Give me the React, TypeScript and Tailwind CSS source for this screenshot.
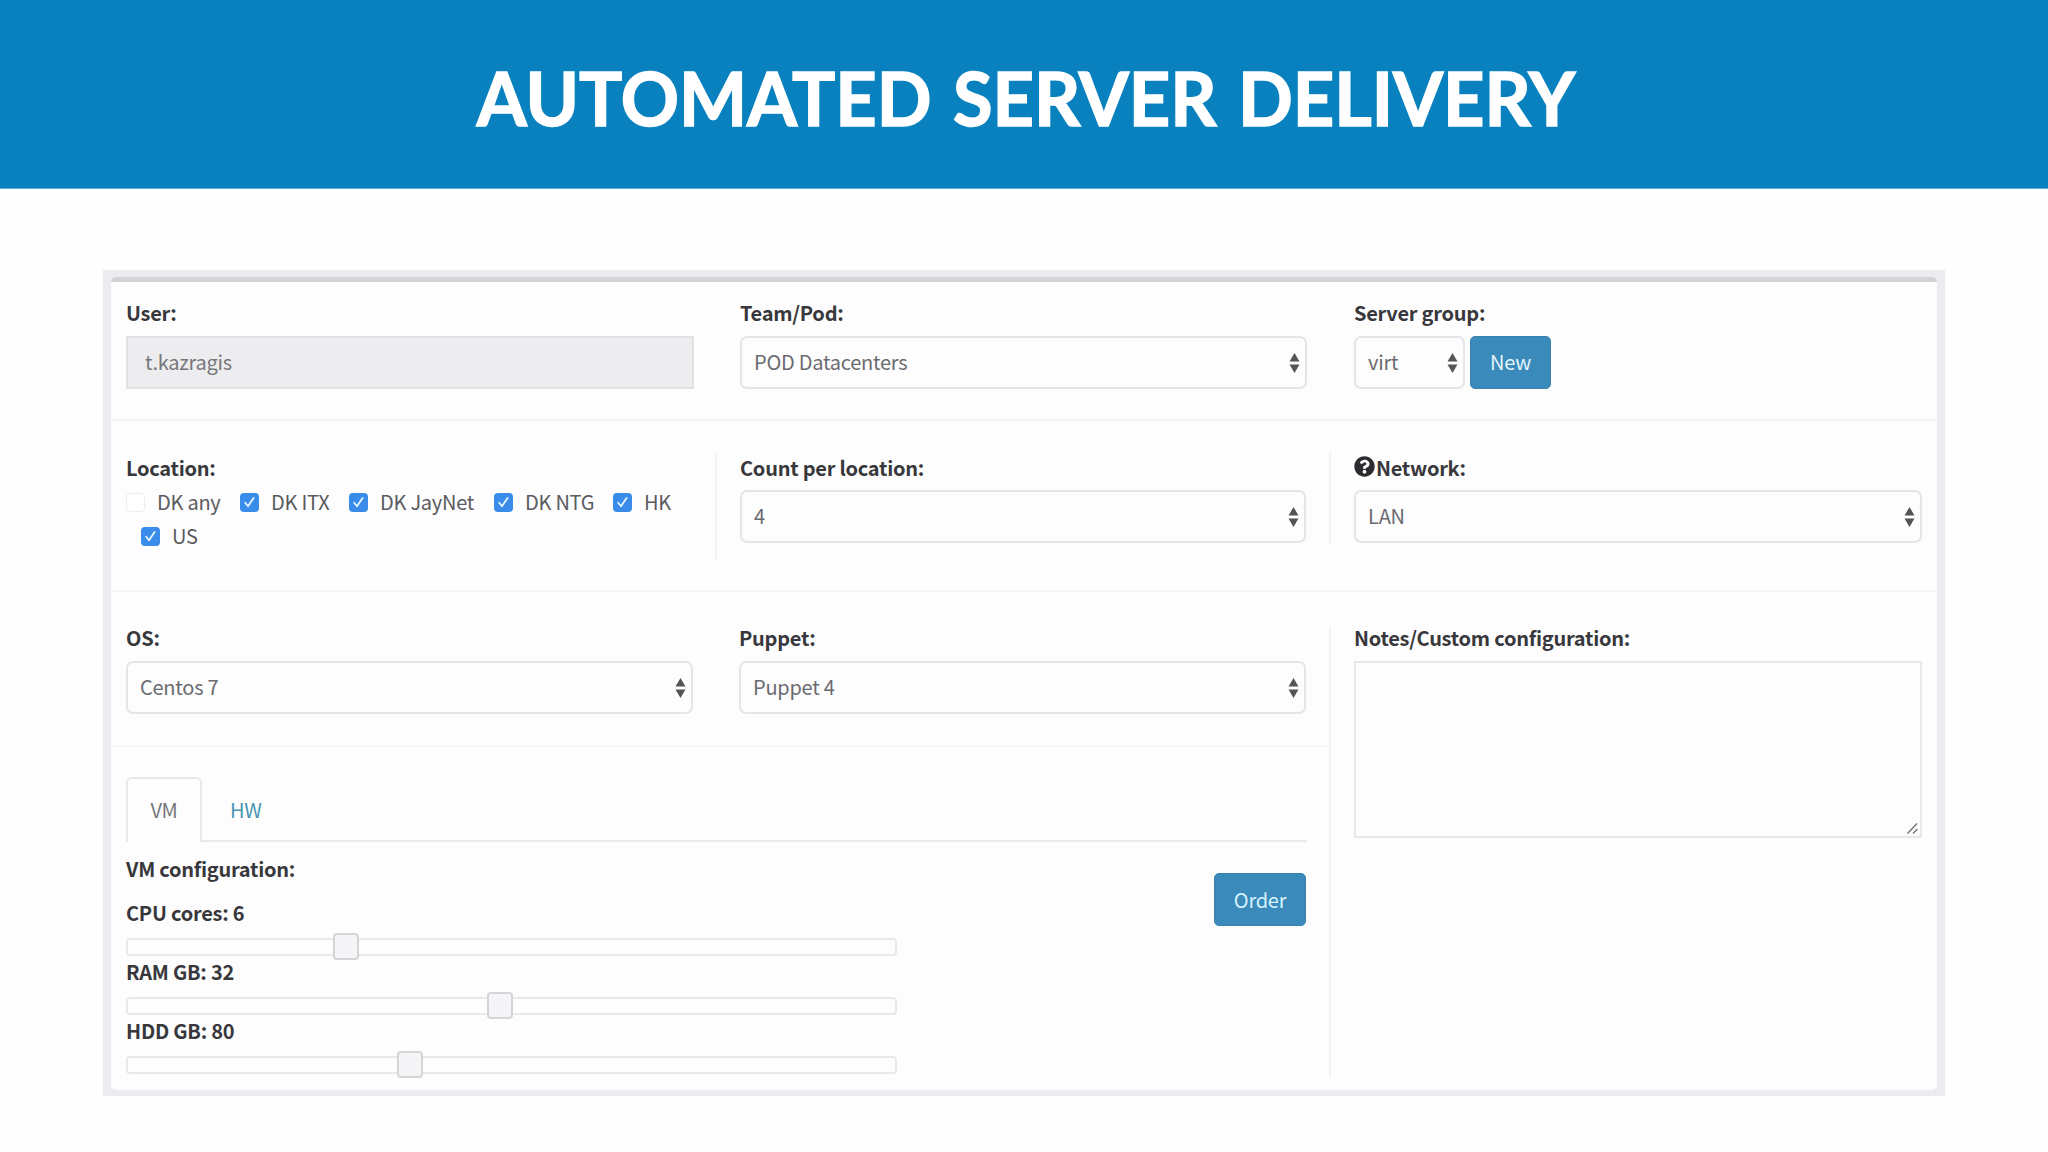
import type { ReactNode } from "react";
import { FaQuestionCircle } from "react-icons/fa";

function Label({ children }: { children: ReactNode }) {
  return <div className="flex h-[30px] items-center pt-[2px] font-bold leading-[28px] text-[#38383c] whitespace-nowrap">{children}</div>;
}

function SelectBox({ value, className }: { value: string; className: string }) {
  return (
    <div className={`flex h-[53px] items-center justify-between rounded-[7px] border-2 border-[#e6e4ea] pl-[12px] pr-[5px] text-[#6b6b6f] ${className}`}>
      <span className="pb-px">{value}</span>
      <svg width="11" height="20" viewBox="0 0 11 20" fill="#555558">
        <path d="M5.5 0 L10.5 8.5 H0.5 Z" />
        <path d="M0.5 11.5 H10.5 L5.5 20 Z" />
      </svg>
    </div>
  );
}

function Check({ label, checked = true, className }: { label: string; checked?: boolean; className: string }) {
  return (
    <label className={`flex shrink-0 items-center whitespace-nowrap text-[#5b5b5f] ${className}`}>
      {checked ? (
        <svg width="19" height="19" viewBox="0 0 19 19" className="mr-[12px]">
          <rect width="19" height="19" rx="4" fill="#3a8cea" />
          <path d="M5.2 9.8 L8 13.2 L13.6 5" fill="none" stroke="#e8f6ff" strokeWidth="1.8" strokeLinecap="round" strokeLinejoin="round" />
        </svg>
      ) : (
        <span className="mr-[12px] h-[19px] w-[19px] rounded-[4px] border border-[#eeecf1] bg-white" />
      )}
      {label}
    </label>
  );
}

function Slider({ label, position }: { label: string; position: number }) {
  return (
    <div className="h-[59px]">
      <Label>{label}</Label>
      <div className="relative mt-[11px] h-[18px] w-[771px] rounded-[4px] border-2 border-[#e9e8ec]">
        <div
          className="absolute -top-[7px] h-[27px] w-[26px] rounded-[4px] border-2 border-[#d5d5d8] bg-[#f5f4f6]"
          style={{ left: position }}
        />
      </div>
    </div>
  );
}

const locations = [
  { label: "DK any", checked: false, className: "w-[114px]" },
  { label: "DK ITX", checked: true, className: "w-[109px]" },
  { label: "DK JayNet", checked: true, className: "w-[145px]" },
  { label: "DK NTG", checked: true, className: "w-[119px]" },
  { label: "HK", checked: true, className: "w-[70px]" },
];

const sliders = [
  { label: "CPU cores: 6", position: 205 },
  { label: "RAM GB: 32", position: 359 },
  { label: "HDD GB: 80", position: 269 },
];

export default function App() {
  return (
    <div className="h-[1152px] w-[2048px] overflow-hidden bg-[#fefefe] font-['Noto_Sans_CJK_SC',sans-serif] text-[20px] leading-[30px] tracking-[-0.25px]">
      {/* Title */}
      <header className="flex h-[189px] items-center justify-center border-b border-[#62add5] bg-[#0881be]">
        <h1 className="scale-x-[0.955] pt-[5px] pl-1 font-['Lato',sans-serif] text-[75.5px] font-bold leading-none tracking-normal text-white whitespace-nowrap [word-spacing:4px] [-webkit-text-stroke:1.5px_white]">
          AUTOMATED SERVER DELIVERY
        </h1>
      </header>

      {/* Order form */}
      <main className="mt-[81px] ml-[103px] h-[826px] w-[1842px] bg-[#ebebf0] px-[8px] pt-[7px] pb-[6px]">
        <div className="h-[813px] w-full rounded-[5px] border-t-[5px] border-[#d3d4da] bg-[#fdfdfe]">

          <section className="flex h-[139px] border-b-2 border-[#f3f2f6] pl-[15px] pt-[15px]">
            <div className="w-[614px]">
              <Label>User:</Label>
              <div className="mt-[9px] flex h-[53px] w-[568px] items-center border-2 border-[#e2e2e5] bg-[#ededef] pb-px pl-[17px] text-[#77777b]">
                t.kazragis
              </div>
            </div>
            <div className="w-[614px]">
              <Label>Team/Pod:</Label>
              <SelectBox value="POD Datacenters" className="mt-[9px] w-[567px]" />
            </div>
            <div>
              <Label>Server group:</Label>
              <div className="mt-[9px] flex gap-[5px]">
                <SelectBox value="virt" className="w-[111px]" />
                <button className="h-[53px] w-[81px] rounded-[5px] border border-[#3a81ac] bg-[#3a8bbb] pb-px text-[#e3f4fc]">New</button>
              </div>
            </div>
          </section>

          <section className="flex h-[171px] border-b-2 border-[#f5f4f7] pl-[15px] pt-[31px]">
            <div className="h-[107px] w-[591px] border-r-2 border-[#f3f2f6]">
              <Label>Location:</Label>
              <div className="mt-[3px] flex h-[34px]">
                {locations.map((l) => (
                  <Check key={l.label} {...l} />
                ))}
              </div>
              <div className="flex h-[34px] pl-[15px]">
                <Check label="US" className="w-[70px]" />
              </div>
            </div>
            <div className="ml-[23px] h-[92px] w-[591px] border-r-2 border-[#f3f2f6]">
              <Label>Count per location:</Label>
              <SelectBox value="4" className="mt-[8px] w-[566px]" />
            </div>
            <div className="ml-[23px]">
              <Label>
                <FaQuestionCircle className="mr-[1px] mb-[4px] size-[21px] text-[#2c2c30]" />
                Network:
              </Label>
              <SelectBox value="LAN" className="mt-[8px] w-[568px]" />
            </div>
          </section>

          <div className="flex">
            <div className="w-[1218px]">
              <section className="flex h-[155px] border-b-2 border-[#f6f5f8] pl-[15px] pt-[30px]">
                <div className="w-[613px]">
                  <Label>OS:</Label>
                  <SelectBox value="Centos 7" className="mt-[9px] w-[567px]" />
                </div>
                <div>
                  <Label>Puppet:</Label>
                  <SelectBox value="Puppet 4" className="mt-[9px] w-[567px]" />
                </div>
              </section>

              <section className="pl-[15px] pt-[30px]">
                {/* Tabs */}
                <div className="flex h-[65px] w-[1181px]">
                  <div className="flex w-[76px] items-center justify-center rounded-t-[6px] border-2 border-b-0 border-[#e9e7ec] pb-[2px] text-[#77777b]">VM</div>
                  <div className="flex flex-1 items-center border-b-2 border-[#ebe9ee] pl-[28px] pt-[2px] text-[#4797b3]">HW</div>
                </div>

                <div className="mt-[11px] flex w-[1180px] justify-between">
                  <div>
                    <Label>VM configuration:</Label>
                    <div className="mt-[14px]">
                      {sliders.map((s) => (
                        <Slider key={s.label} {...s} />
                      ))}
                    </div>
                  </div>
                  <button className="mt-[20px] h-[53px] w-[92px] rounded-[5px] border border-[#3a81ac] bg-[#3a8bbb] text-[#d5f1fc]">Order</button>
                </div>
              </section>
            </div>

            <section className="mt-[34px] h-[452px] border-l-2 border-[#f3f2f6] pl-[23px]">
              <div className="-mt-[4px]">
                <Label>Notes/Custom configuration:</Label>
              </div>
              <div className="mt-[9px] flex h-[177px] w-[568px] items-end justify-end border-2 border-[#e8e7ec] pr-[2px] pb-[2px]">
                <svg width="11" height="11" viewBox="0 0 11 11" stroke="#77777b" strokeWidth="1.5">
                  <path d="M0.5 10.5 L10 0.5 M6 10.5 L10.5 6" />
                </svg>
              </div>
            </section>
          </div>

        </div>
      </main>
    </div>
  );
}
